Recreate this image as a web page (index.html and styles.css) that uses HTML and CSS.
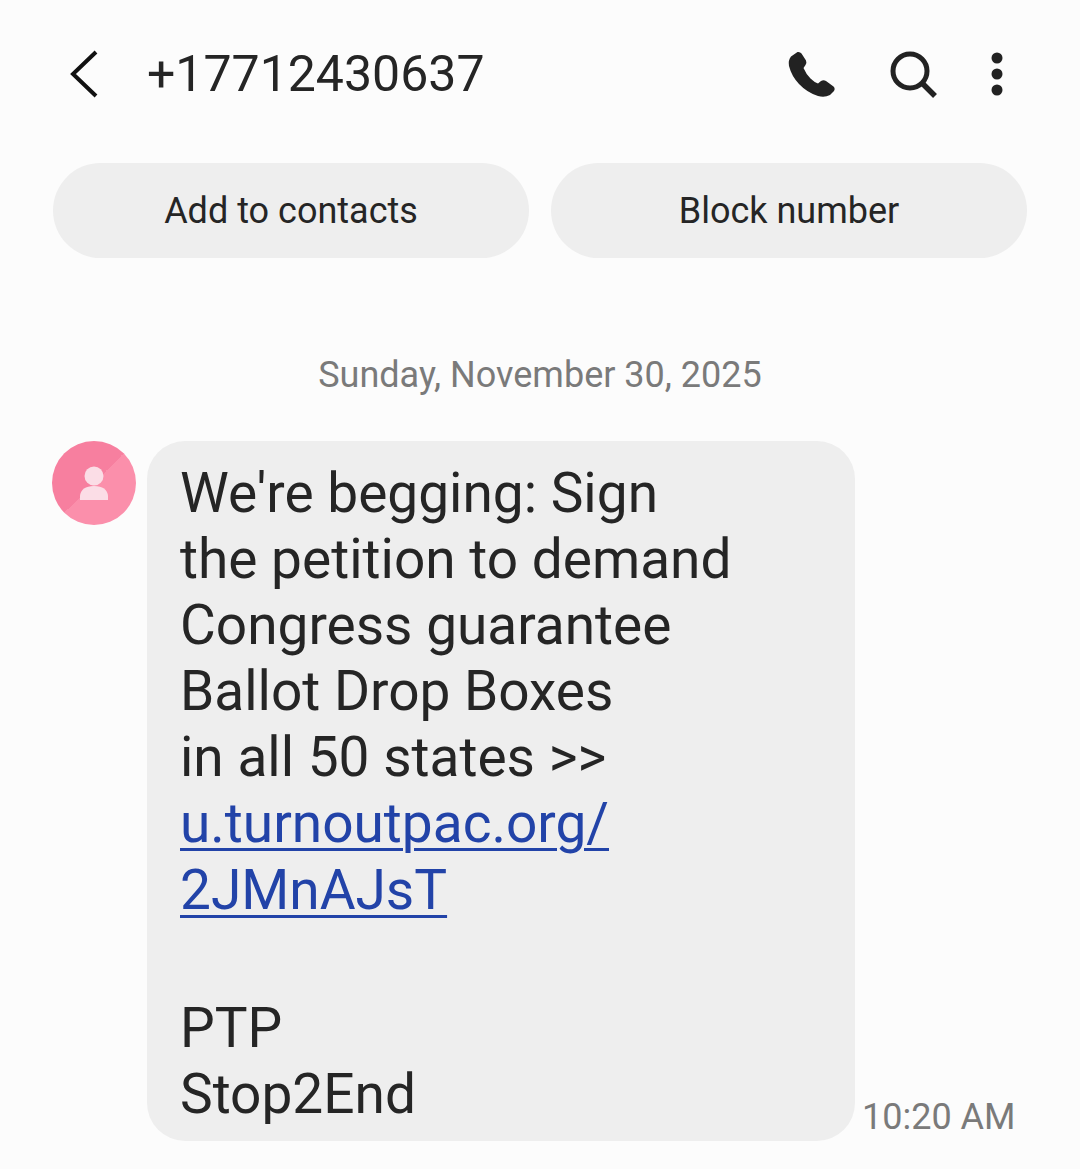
FILE: index.html
```html
<!DOCTYPE html>
<html lang="en">

<head>
    <meta charset="UTF-8" />
    <meta name="viewport" content="width=device-width, initial-scale=1.0" />
    <title>+17712430637</title>
    <link rel="stylesheet" href="styles.css">
</head>

<body>
    <header class="top-bar">
        <svg class="back-icon" width="32" height="48" viewBox="0 0 32 48">
            <path d="M28 4 L5 26 L28 48" transform="translate(0 -2)" fill="none" stroke="#111" stroke-width="4" />
        </svg>
        <h1 class="number">+17712430637</h1>
        <div class="top-icons">
            <svg class="icon" width="50" height="50" viewBox="0 0 50 50">
                <path fill="#222" d="M5 7.5 L11.500 3 Q14 2.500 15.500 4.500 L20 11.500 Q21 14 19.500 16 L17.500 19 Q20 25 24.500 29.500 Q28 33 32 34.500 L35 32 Q37.500 30.500 40 32 L47.500 37.500 Q49.500 39.500 48 42 L44 46 Q38.500 49 32 47 Q21 43.500 13 35 Q5.500 27 3 17 Q2 11 5 7.500 Z" />
            </svg>
            <svg class="icon" width="50" height="50" viewBox="0 0 50 50">
                <circle cx="22" cy="22" r="17" fill="none" stroke="#222" stroke-width="5" />
                <path d="M34 34 L47 47" stroke="#222" stroke-width="5.500" fill="none" />
            </svg>
            <svg class="icon" width="14" height="50" viewBox="0 0 14 50">
                <circle cx="7" cy="9" r="5.500" fill="#222" />
                <circle cx="7" cy="25" r="5.500" fill="#222" />
                <circle cx="7" cy="41" r="5.500" fill="#222" />
            </svg>
        </div>
    </header>

    <div class="actions">
        <button class="pill">Add to contacts</button>
        <button class="pill">Block number</button>
    </div>

    <div class="date">Sunday, November 30, 2025</div>

    <section class="message-row">
        <div class="avatar">
            <svg width="84" height="84" viewBox="0 0 84 84">
                <circle cx="42" cy="35" r="9.500" fill="#fbdde6" />
                <path d="M28 59 L28 55 Q29 45 42 45 Q55 45 56 55 L56 59 Z" fill="#fbdde6" />
            </svg>
        </div>
        <div class="bubble">
            <span class="line">We're begging: Sign</span>
            <span class="line">the petition to demand</span>
            <span class="line">Congress guarantee</span>
            <span class="line">Ballot Drop Boxes</span>
            <span class="line">in all 50 states &gt;&gt;</span>
            <a class="line link first-link">u.turnoutpac.org/</a>
            <a class="line link second-link">2JMnAJsT</a>
            <span class="line blank">&nbsp;</span>
            <span class="line">PTP</span>
            <span class="line">Stop2End</span>
        </div>
        <div class="time">10:20 AM</div>
    </section>
</body>

</html>
```

FILE: styles.css
```css
body {
    margin: 0;
    height: 1169px;
    overflow: hidden;
    background: #fcfcfc;
    color: #252525;
    font-family: 'Roboto', 'Liberation Sans', sans-serif;
}

.top-bar {
    display: flex;
    align-items: center;
    height: 100px;
    padding: 24px 0 0 68px;
    box-sizing: content-box;
}

.back-icon {
    flex: none;
}

.number {
    margin: 0 0 0 47px;
    font-size: 50px;
    font-weight: 400;
    line-height: 60px;
    flex: 1;
}

.top-icons {
    display: flex;
    align-items: center;
    gap: 52px;
    padding-right: 76px;
}

.icon {
    display: block;
}

.actions {
    display: flex;
    gap: 22px;
    padding: 39px 53px 0;
}

.pill {
    flex: 1;
    height: 95px;
    border: none;
    border-radius: 48px;
    background: #eeeeee;
    color: #252525;
    font-family: inherit;
    font-size: 36px;
    padding: 0;
}

.date {
    margin-top: 93px;
    text-align: center;
    color: #7a7a7a;
    font-size: 36px;
    line-height: 48px;
}

.message-row {
    display: flex;
    align-items: flex-end;
    margin-top: 42px;
    padding-left: 52px;
    position: relative;
}

.avatar {
    align-self: flex-start;
    width: 84px;
    height: 84px;
    border-radius: 50%;
    background: linear-gradient(135deg, #f77f9f 0 50%, #fb8fab 50% 100%);
    flex: none;
}

.avatar svg {
    display: block;
}

.bubble {
    margin-left: 11px;
    width: 708px;
    box-sizing: border-box;
    height: 700px;
    padding: 19px 0 0 33px;
    border-radius: 38px;
    background: #eeeeee;
    font-size: 55px;
    line-height: 66px;
    flex: none;
}

.line {
    display: block;
}

.link {
    color: #2243a8;
    text-decoration: underline;
    text-decoration-thickness: 3px;
    text-underline-offset: 6px;
}

.first-link {
    height: 67px;
}

.second-link {
    height: 72px;
}

.time {
    margin: 0 0 2px 7px;
    color: #7a7a7a;
    font-size: 36px;
    line-height: 44px;
    white-space: nowrap;
}
```
